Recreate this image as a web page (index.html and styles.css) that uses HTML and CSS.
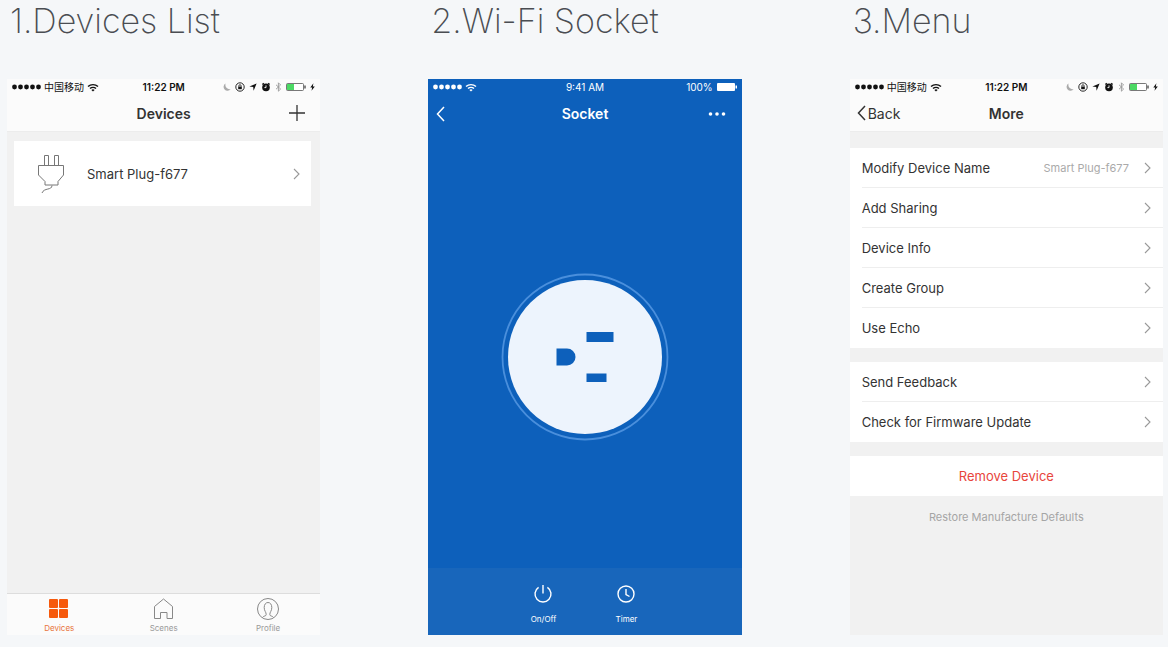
FILE: index.html
```html
<!DOCTYPE html>
<html lang="en">
<head>
  <meta charset="UTF-8">
  <meta name="viewport" content="width=device-width, initial-scale=1.0">
  <title>Smart Plug App</title>
  <link rel="stylesheet" href="styles.css">
</head>
<body>

  <!-- Shared icons -->
  <svg class="sprite" aria-hidden="true">
    <symbol id="dots" viewBox="0 0 29 6">
      <g fill="currentColor">
        <circle cx="2.5" cy="3" r="2.4"/><circle cx="8.5" cy="3" r="2.4"/><circle cx="14.5" cy="3" r="2.4"/><circle cx="20.5" cy="3" r="2.4"/><circle cx="26.5" cy="3" r="2.4"/>
      </g>
    </symbol>
    <symbol id="wifi" viewBox="0 0 12 9">
      <path d="M1 3.6a7.2 7.2 0 0 1 10 0M3 5.6a4.3 4.3 0 0 1 6 0" fill="none" stroke="currentColor" stroke-width="1.4"/>
      <path d="M6 8.6 4.4 7a2.3 2.3 0 0 1 3.2 0z" fill="currentColor"/>
    </symbol>
    <symbol id="moon" viewBox="0 0 8 8">
      <path d="M2.6.6A3.8 3.8 0 1 0 7.6 6 4.2 4.2 0 0 1 2.6.6z" fill="#aaa"/>
    </symbol>
    <symbol id="lock" viewBox="0 0 10 10">
      <circle cx="5" cy="5" r="4.2" fill="none" stroke="currentColor" stroke-width=".9"/>
      <path d="M3.2 4.6h3.6v2.6H3.2z" fill="currentColor"/>
      <path d="M3.9 4.7V3.8a1.1 1.1 0 0 1 2.2 0v.9" fill="none" stroke="currentColor" stroke-width=".8"/>
    </symbol>
    <symbol id="arrow" viewBox="0 0 8 8">
      <path d="M7.6.4 4.6 7.8 4.2 3.9.4 3.6z" fill="currentColor"/>
    </symbol>
    <symbol id="alarm" viewBox="0 0 10 10">
      <circle cx="5" cy="5.4" r="3.8" fill="currentColor"/>
      <path d="M1.400 2.600 2.800 1.300M8.600 2.600 7.200 1.300" stroke="currentColor" stroke-width="1.3"/>
      <path d="M5 3.4v2.2H3.4" fill="none" stroke="#fff" stroke-width=".9"/>
    </symbol>
    <symbol id="bluetooth" viewBox="0 0 7 10">
      <path d="M1 2.8 5.6 7 3.4 9.2V.8L5.6 3 1 7.2" fill="none" stroke="#999" stroke-width=".9"/>
    </symbol>
    <symbol id="battery" viewBox="0 0 20 8">
      <rect x=".5" y=".5" width="17" height="7" rx="1" fill="#fff" stroke="#555" stroke-width=".8"/>
      <rect x="1" y="1" width="7" height="6" fill="#4cd964"/>
      <path d="M18.4 2.6h1.2v2.8h-1.2z" fill="#333"/>
    </symbol>
    <symbol id="bolt" viewBox="0 0 5 8">
      <path d="M3.4.2.3 4.5h1.9L1.5 7.8 4.8 3.4H2.8z" fill="currentColor"/>
    </symbol>
    <symbol id="chevron" viewBox="0 0 7 12">
      <path d="M1 1l5 5-5 5" fill="none" stroke="currentColor" stroke-width="1.1"/>
    </symbol>
    <symbol id="back" viewBox="0 0 9 16">
      <path d="M8 1 1.5 8 8 15" fill="none" stroke="currentColor" stroke-width="1.5"/>
    </symbol>
  </svg>

  <div class="page">

    <!-- Devices list -->
    <section class="step">
      <h1>1.Devices List</h1>
      <div class="phone">
        <div class="status">
          <div class="signal">
            <svg class="icon-dots"><use href="#dots"/></svg>
            <span>中国移动</span>
            <svg class="icon-wifi"><use href="#wifi"/></svg>
          </div>
          <b>11:22 PM</b>
          <div class="indicators">
            <svg class="icon-8"><use href="#moon"/></svg>
            <svg class="icon-10"><use href="#lock"/></svg>
            <svg class="icon-8"><use href="#arrow"/></svg>
            <svg class="icon-10"><use href="#alarm"/></svg>
            <svg class="icon-bt"><use href="#bluetooth"/></svg>
            <svg class="icon-battery"><use href="#battery"/></svg>
            <svg class="icon-bolt"><use href="#bolt"/></svg>
          </div>
        </div>
        <header class="navbar">
          <span></span>
          <h2>Devices</h2>
          <button class="add" aria-label="Add device">
            <svg width="16" height="16" viewBox="0 0 16 16"><path d="M8 0v16M0 8h16" stroke="currentColor" stroke-width="1.3"/></svg>
          </button>
        </header>
        <main class="devices">
          <a class="device" href="#socket">
            <svg class="plug" viewBox="0 0 28 40" fill="none" stroke="#777" stroke-width="1">
              <path d="M7.5 11.5v-10h4v10M17.5 11.5v-10h4v10M1.5 11.5h25V21L21 27.5V31H8v-3.500L1.5 21z"/>
              <path d="M15 31.5c0 5-8 2-10 7.5"/>
            </svg>
            <span>Smart Plug-f677</span>
            <svg class="chevron"><use href="#chevron"/></svg>
          </a>
        </main>
        <nav class="tabs">
          <a class="active" href="#devices">
            <svg width="24" height="24" viewBox="0 0 24 24" fill="#f6590c"><rect x="2" y="2" width="9" height="9" rx="1"/><rect x="12" y="2" width="9" height="9" rx="1"/><rect x="2" y="12" width="9" height="9" rx="1"/><rect x="12" y="12" width="9" height="9" rx="1"/></svg>
            Devices
          </a>
          <a href="#scenes">
            <svg width="24" height="24" viewBox="0 0 24 24" fill="none" stroke="#888"><path d="M2.500 21.500V9.500L11.500 2l9 7.500v12H15v-6H8.500v6z"/></svg>
            Scenes
          </a>
          <a href="#profile">
            <svg width="24" height="24" viewBox="0 0 24 24" fill="none" stroke="#888"><circle cx="12" cy="12" r="10.5"/><path d="M6.5 20.500c1-2 3.700-1 3.700-3 0-2.500-2-3.500-2-7 0-3 1.500-5 3.800-5s3.800 2 3.800 5c0 3.500-2 4.500-2 7 0 2 2.700 1 3.700 3"/></svg>
            Profile
          </a>
        </nav>
      </div>
    </section>

    <!-- Socket control -->
    <section class="step">
      <h1>2.Wi-Fi Socket</h1>
      <div class="phone blue">
        <div class="status">
          <div class="signal">
            <svg class="icon-dots"><use href="#dots"/></svg>
            <svg class="icon-wifi"><use href="#wifi"/></svg>
          </div>
          <span>9:41 AM</span>
          <div class="indicators">
            <span>100%</span>
            <svg class="icon-battery" viewBox="0 0 20 8" fill="#fff"><rect width="18" height="8" rx="1"/><path d="M18.5 2.5H20v3h-1.500z"/></svg>
          </div>
        </div>
        <header class="navbar">
          <button class="back" aria-label="Back"><svg class="icon-back"><use href="#back"/></svg></button>
          <h2>Socket</h2>
          <button class="more" aria-label="More">
            <svg width="18" height="4" viewBox="0 0 18 4" fill="currentColor"><circle cx="2.5" cy="2" r="1.8"/><circle cx="9" cy="2" r="1.8"/><circle cx="15.5" cy="2" r="1.8"/></svg>
          </button>
        </header>
        <main class="stage">
          <button class="socket" aria-label="Toggle socket">
            <svg viewBox="0 0 168 168">
              <circle cx="84" cy="84" r="82.5" fill="none" stroke="#4a8fdc" stroke-width="1.8"/>
              <circle cx="84" cy="84" r="77" fill="#edf4fd"/>
              <g fill="#0d60bb">
                <path d="M55.5 75.500H66a8.300 8.300 0 0 1 0 17H55.500z"/>
                <rect x="85.5" y="59" width="27" height="10"/>
                <rect x="85.5" y="100.500" width="20" height="8.500"/>
              </g>
            </svg>
          </button>
        </main>
        <footer class="controls">
          <button>
            <svg width="20" height="20" viewBox="0 0 20 20" fill="none" stroke="currentColor" stroke-width="1.4"><path d="M5.600 3.300a8 8 0 1 0 8.800 0M10 1v8.500"/></svg>
            On/Off
          </button>
          <button>
            <svg width="20" height="20" viewBox="0 0 20 20" fill="none" stroke="currentColor" stroke-width="1.4"><circle cx="10" cy="10" r="8"/><path d="M10 5v5.500l3.500 2"/></svg>
            Timer
          </button>
        </footer>
      </div>
    </section>

    <!-- Device menu -->
    <section class="step">
      <h1>3.Menu</h1>
      <div class="phone">
        <div class="status">
          <div class="signal">
            <svg class="icon-dots"><use href="#dots"/></svg>
            <span>中国移动</span>
            <svg class="icon-wifi"><use href="#wifi"/></svg>
          </div>
          <b>11:22 PM</b>
          <div class="indicators">
            <svg class="icon-8"><use href="#moon"/></svg>
            <svg class="icon-10"><use href="#lock"/></svg>
            <svg class="icon-8"><use href="#arrow"/></svg>
            <svg class="icon-10"><use href="#alarm"/></svg>
            <svg class="icon-bt"><use href="#bluetooth"/></svg>
            <svg class="icon-battery"><use href="#battery"/></svg>
            <svg class="icon-bolt"><use href="#bolt"/></svg>
          </div>
        </div>
        <header class="navbar">
          <button class="back"><svg class="icon-back"><use href="#back"/></svg>Back</button>
          <h2>More</h2>
          <span></span>
        </header>
        <main class="menu">
          <div class="group">
            <a href="#name">Modify Device Name <small>Smart Plug-f677</small><svg class="chevron"><use href="#chevron"/></svg></a>
            <a href="#sharing">Add Sharing<svg class="chevron"><use href="#chevron"/></svg></a>
            <a href="#info">Device Info<svg class="chevron"><use href="#chevron"/></svg></a>
            <a href="#group">Create Group<svg class="chevron"><use href="#chevron"/></svg></a>
            <a href="#echo">Use Echo<svg class="chevron"><use href="#chevron"/></svg></a>
          </div>
          <div class="group">
            <a href="#feedback">Send Feedback<svg class="chevron"><use href="#chevron"/></svg></a>
            <a href="#firmware">Check for Firmware Update<svg class="chevron"><use href="#chevron"/></svg></a>
          </div>
          <button class="remove">Remove Device</button>
          <button class="restore">Restore Manufacture Defaults</button>
        </main>
      </div>
    </section>

  </div>
</body>
</html>
```

FILE: styles.css
```css
* {
  box-sizing: border-box;
}
body {
  margin: 0;
  background-color: #f5f7f9;
  color: #333;
  font-family: Inter, "Noto Sans CJK SC", sans-serif;
  font-size: 13px;
}
a {
  color: inherit;
  text-decoration: none;
}
button {
  padding: 0;
  border: none;
  background: none;
  color: inherit;
  font: inherit;
  cursor: pointer;
}
svg {
  display: block;
  flex: none;
}
.sprite {
  display: none;
}
.page {
  display: grid;
  grid-template-columns: repeat(3, 1fr);
  gap: 108px;
  min-height: 100vh;
  padding: 0 5px 12px 7px;
}
.step {
  display: flex;
  flex-direction: column;
}
.step h1 {
  margin: 0 0 37px;
  padding-left: 3px;
  color: #4a4d52;
  font-size: 34px;
  font-weight: 200;
  line-height: 42px;
  white-space: nowrap;
}
.phone {
  display: flex;
  flex: 1;
  flex-direction: column;
  background-color: #f1f1f1;
}

/* Status bar */
.status {
  display: grid;
  grid-template-columns: 1fr auto 1fr;
  align-items: center;
  height: 16px;
  padding: 0 5px;
  background-color: #fbfbfb;
  color: #111;
  font-size: 10px;
  line-height: 16px;
}
.status b {
  font-weight: 600;
}
.signal, .indicators {
  display: flex;
  align-items: center;
  gap: 3px;
}
.indicators {
  justify-content: flex-end;
  gap: 4px;
}
.icon-dots {
  width: 29px;
  height: 6px;
}
.icon-wifi {
  width: 12px;
  height: 9px;
}
.icon-8 {
  width: 8px;
  height: 8px;
}
.icon-10 {
  width: 10px;
  height: 10px;
}
.icon-bt {
  width: 7px;
  height: 10px;
}
.icon-battery {
  width: 20px;
  height: 8px;
}
.icon-bolt {
  width: 5px;
  height: 8px;
}
.icon-back {
  width: 9px;
  height: 16px;
}
.chevron {
  width: 7px;
  height: 12px;
  margin-left: auto;
  color: #999;
}

/* Title bar */
.navbar {
  display: grid;
  grid-template-columns: 1fr auto 1fr;
  align-items: center;
  height: 37px;
  padding: 0 7px;
  border-bottom: 1px solid #ececec;
  background-color: #fbfbfb;
}
.navbar h2 {
  margin: 0;
  font-size: 14px;
  font-weight: 600;
}
.add, .more {
  justify-self: end;
  padding-right: 8px;
}
.back {
  display: flex;
  align-items: center;
  justify-self: start;
  gap: 2px;
  font-size: 14px;
}

/* Devices */
.devices {
  flex: 1;
  padding: 9px 9px 9px 7px;
}
.device {
  display: flex;
  align-items: center;
  height: 65px;
  padding: 0 11px 0 23px;
  background-color: #fff;
}
.plug {
  width: 28px;
  height: 40px;
  margin-right: 22px;
}
.tabs {
  display: flex;
  height: 42px;
  border-top: 1px solid #ddd;
  background-color: #fbfbfb;
  color: #999;
  font-size: 8px;
  line-height: 10px;
}
.tabs a {
  display: flex;
  flex: 1;
  flex-direction: column;
  align-items: center;
  gap: 2px;
  padding-top: 3px;
}
.tabs .active {
  color: #e8743c;
}

/* Socket */
.blue {
  background-color: #0d60bb;
  color: #fff;
}
.blue .status, .blue .navbar {
  border: none;
  background: none;
  color: inherit;
}
.blue .navbar {
  padding: 0 8px;
}
.stage {
  display: flex;
  flex: 1;
  align-items: center;
  justify-content: center;
  padding-top: 14px;
}
.socket {
  width: 168px;
  border-radius: 50%;
}
.controls {
  display: flex;
  justify-content: center;
  height: 67px;
  background-color: #1866bb;
  font-size: 8px;
  line-height: 10px;
}
.controls button {
  display: flex;
  flex-direction: column;
  align-items: center;
  gap: 10px;
  width: 83px;
  padding-top: 16px;
}

/* Menu */
.menu {
  display: flex;
  flex: 1;
  flex-direction: column;
  gap: 14px;
  padding-top: 16px;
}
.group {
  padding-left: 12px;
  background-color: #fff;
}
.group a {
  display: flex;
  align-items: center;
  height: 40px;
  padding-right: 12px;
  border-bottom: 1px solid #eee;
}
.group a:last-child {
  border-color: transparent;
}
.group small {
  margin-left: auto;
  color: #aaa;
  font-size: 11px;
}
.group small + .chevron {
  margin-left: 15px;
}
.remove {
  height: 40px;
  background-color: #fff;
  color: #e8453c;
}
.restore {
  color: #a5a5a5;
  font-size: 11px;
  line-height: 14px;
}
```
